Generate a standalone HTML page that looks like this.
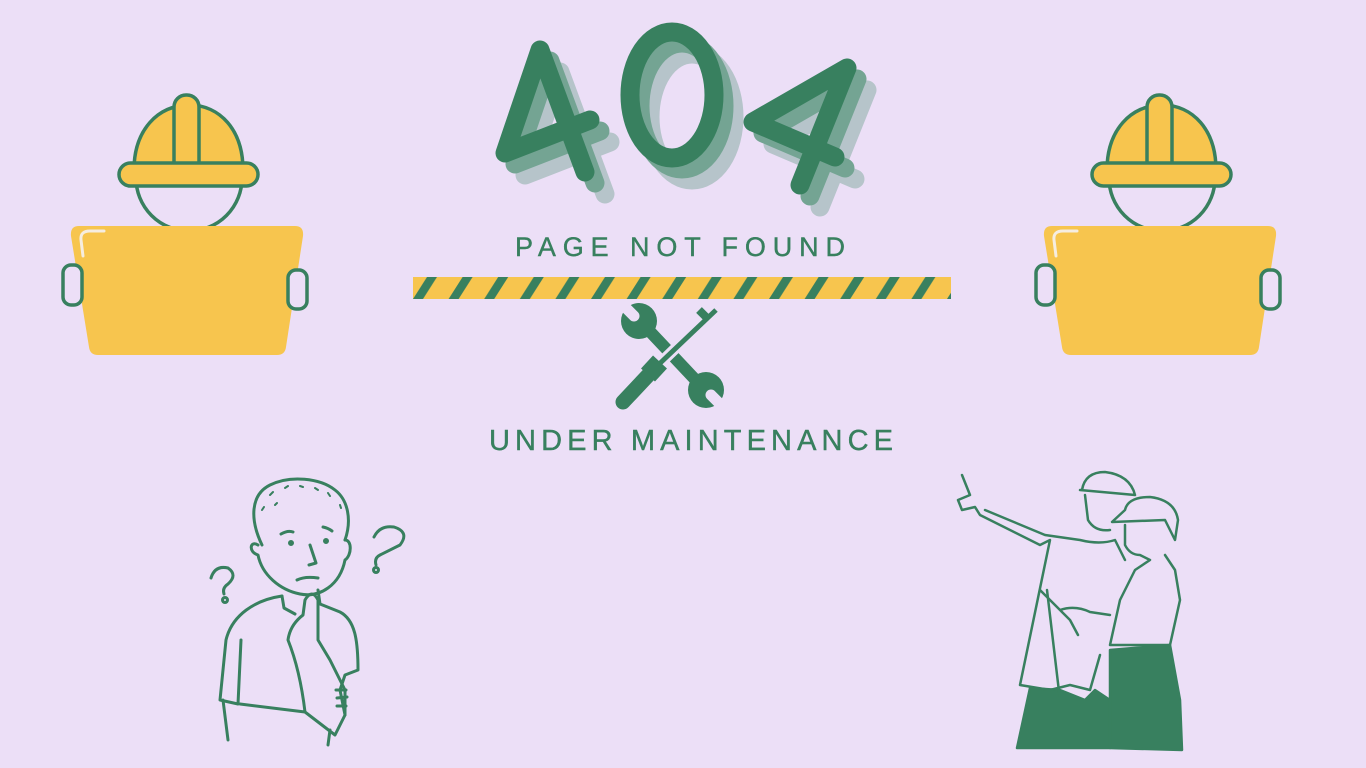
<!DOCTYPE html>
<html><head><meta charset="utf-8"><style>
html,body{margin:0;padding:0;background:#ecdff7;}
svg{display:block;}
</style></head><body>
<svg width="1366" height="768" viewBox="0 0 1366 768" xmlns="http://www.w3.org/2000/svg">
<rect width="1366" height="768" fill="#ecdff7"/>
<defs>
<g id="worker">
  <circle cx="189" cy="178" r="53" fill="none" stroke="#38805f" stroke-width="3.5"/>
  <path d="M134,170 C134,130 158,105 189,105 C220,105 243,130 243,170 Z" fill="#f7c54e" stroke="#38805f" stroke-width="3.5"/>
  <rect x="174" y="95" width="25" height="80" rx="12" fill="#f7c54e" stroke="#38805f" stroke-width="3.5"/>
  <rect x="119" y="163" width="139" height="23" rx="11.5" fill="#f7c54e" stroke="#38805f" stroke-width="3.5"/>
  <path d="M79,226 L295,226 Q304,226 303,236 L286,347 Q285,355 277,355 L98,355 Q90,355 89,347 L71,236 Q70,226 79,226 Z" fill="#f7c54e"/>
  <path d="M83,256 L81,240 Q80,231 90,231 L104,231" fill="none" stroke="#f6ede0" stroke-width="3" stroke-linecap="round"/>
  <rect x="63" y="265" width="19" height="40" rx="8" fill="#ecdff7" stroke="#38805f" stroke-width="3.5"/>
  <rect x="288" y="270" width="19" height="39" rx="8" fill="#ecdff7" stroke="#38805f" stroke-width="3.5"/>
</g>
<pattern id="stripes" x="413" y="277" width="35.6" height="22" patternUnits="userSpaceOnUse">
  <rect width="35.6" height="22" fill="#f7c54e"/>
  <polygon points="14,0 24,0 10,22 0,22" fill="#38805f"/>
</pattern>
</defs>

<use href="#worker"/>
<use href="#worker" transform="translate(973,0)"/>

<g fill="none" stroke-linecap="round" stroke-linejoin="round" stroke-width="19">
  <g stroke="#b6c4ca" transform="translate(20,22)">
    <path d="M540,50 L505,153 L590,120 M540,50 L585,172"/>
    <ellipse cx="672" cy="95" rx="42" ry="63"/>
    <path d="M847,68 L800,185 M847,68 L753,122 L835,157"/>
  </g>
  <g stroke="#74a493" transform="translate(10,11)">
    <path d="M540,50 L505,153 L590,120 M540,50 L585,172"/>
    <ellipse cx="672" cy="95" rx="42" ry="63"/>
    <path d="M847,68 L800,185 M847,68 L753,122 L835,157"/>
  </g>
  <g stroke="#38805f">
    <path d="M540,50 L505,153 L590,120 M540,50 L585,172"/>
    <ellipse cx="672" cy="95" rx="42" ry="63"/>
    <path d="M847,68 L800,185 M847,68 L753,122 L835,157"/>
  </g>
</g>

<text x="515" y="256" textLength="330" lengthAdjust="spacing" font-family="Liberation Sans, sans-serif" font-size="27" fill="#38805f" stroke="#38805f" stroke-width="0.4">PAGE NOT FOUND</text>

<g>
  <line x1="641" y1="322" x2="705" y2="390" stroke="#38805f" stroke-width="12"/>
  <circle cx="639" cy="321" r="18" fill="#38805f"/>
  <circle cx="706" cy="390" r="18" fill="#38805f"/>
  <line x1="634" y1="316" x2="620" y2="302" stroke="#ecdff7" stroke-width="11" stroke-linecap="round"/>
  <line x1="711" y1="395" x2="728" y2="412" stroke="#ecdff7" stroke-width="11" stroke-linecap="round"/>
  <line x1="715" y1="310" x2="650" y2="373" stroke="#ecdff7" stroke-width="11"/>
  <line x1="716" y1="310" x2="655" y2="368" stroke="#38805f" stroke-width="5"/>
  <line x1="708" y1="319" x2="699" y2="310" stroke="#38805f" stroke-width="8"/>
  <line x1="655" y1="368" x2="623" y2="402" stroke="#38805f" stroke-width="15" stroke-linecap="round"/>
  <line x1="660" y1="362" x2="648" y2="375" stroke="#38805f" stroke-width="19"/>
</g>

<rect x="413" y="277" width="538" height="22" fill="url(#stripes)"/>

<text x="489" y="450" textLength="404" lengthAdjust="spacing" font-family="Liberation Sans, sans-serif" font-size="29" fill="#38805f" stroke="#38805f" stroke-width="0.4">UNDER MAINTENANCE</text>

<g fill="none" stroke="#38805f" stroke-width="3" stroke-linecap="round" stroke-linejoin="round">
  <path d="M262,545 C250,520 250,495 270,485 C290,475 320,478 335,490 C348,500 352,520 345,540"/>
  <path d="M270,495 l3,-3 M285,488 l3,-2 M300,486 l3,1 M315,488 l3,2 M328,493 l2,3 M262,510 l2,-3 M275,505 l2,-2 M340,505 l1,3" stroke-width="2"/>
  <path d="M258,545 C250,540 248,552 258,555 C262,575 280,590 300,594 C320,598 340,585 345,560 C352,555 352,540 345,540"/>
  <path d="M281,534 Q288,530 293,532 M323,527 Q328,528 332,531"/>
  <circle cx="291" cy="543" r="1.5" fill="#38805f"/><circle cx="326" cy="541" r="1.5" fill="#38805f"/>
  <path d="M310,545 L316,563 L309,565 M297,580 Q305,576 318,578"/>
  <path d="M282,596 L284,608 L295,614 M318,590 L320,604"/>
  <path d="M282,596 C255,600 232,615 226,640 L220,700 L238,704 L241,640"/>
  <path d="M223,700 L228,740 M240,704 L305,712 L335,735 L345,715 L345,690 L330,660 L318,640 L318,600 Q312,588 305,600 L303,615 Q290,625 288,640 Q300,670 305,712"/>
  <path d="M320,604 L340,612 C355,620 358,640 358,670 L345,675 L340,690 L345,715 M328,745 L330,730"/>
  <path d="M336,690 L346,690 M337,698 L347,697 M337,706 L346,706"/>
  <path d="M211,578 Q215,565 228,568 Q238,575 228,584 Q222,588 224,594"/><circle cx="225" cy="600" r="2.5"/>
  <path d="M374,537 Q380,525 394,527 Q410,532 400,545 Q390,550 380,555 Q374,558 376,565"/><circle cx="376" cy="570" r="2.5"/>
</g>

<g stroke="#38805f" stroke-width="2.5" fill="none" stroke-linecap="round" stroke-linejoin="round">
  <path d="M1017,748 L1030,688 L1060,690 L1085,700 L1095,690 L1110,700 L1110,748 Z" fill="#38805f"/>
  <path d="M1110,650 L1170,645 L1180,700 L1182,750 L1110,748 Z" fill="#38805f"/>
  <path d="M962,475 L970,495 L958,500 L962,510 L975,507 L980,515 L1040,545 L1050,540 L1020,685 L1050,690 L1070,685 L1090,690 L1100,655"/>
  <path d="M985,510 L1045,535 L1080,540 Q1100,545 1115,540 L1125,560"/>
  <path d="M1082,490 Q1085,472 1105,472 Q1130,475 1135,495 L1080,490 Z" fill="#ecdff7"/>
  <path d="M1085,495 L1088,520 Q1095,532 1110,530"/>
  <path d="M1125,510 Q1128,497 1150,497 Q1175,500 1178,520 L1175,540 L1165,520 L1112,522 Z" fill="#ecdff7"/>
  <path d="M1125,525 L1125,545 Q1130,555 1140,555 L1150,560 L1135,570 L1120,600 L1110,645 L1170,645 L1180,600 L1175,570 L1165,555"/>
  <path d="M1040,590 L1070,620 L1078,635 M1060,610 Q1075,605 1090,612 L1110,615"/>
  <path d="M1047,590 L1060,700"/>
</g>
</svg>
</body></html>
